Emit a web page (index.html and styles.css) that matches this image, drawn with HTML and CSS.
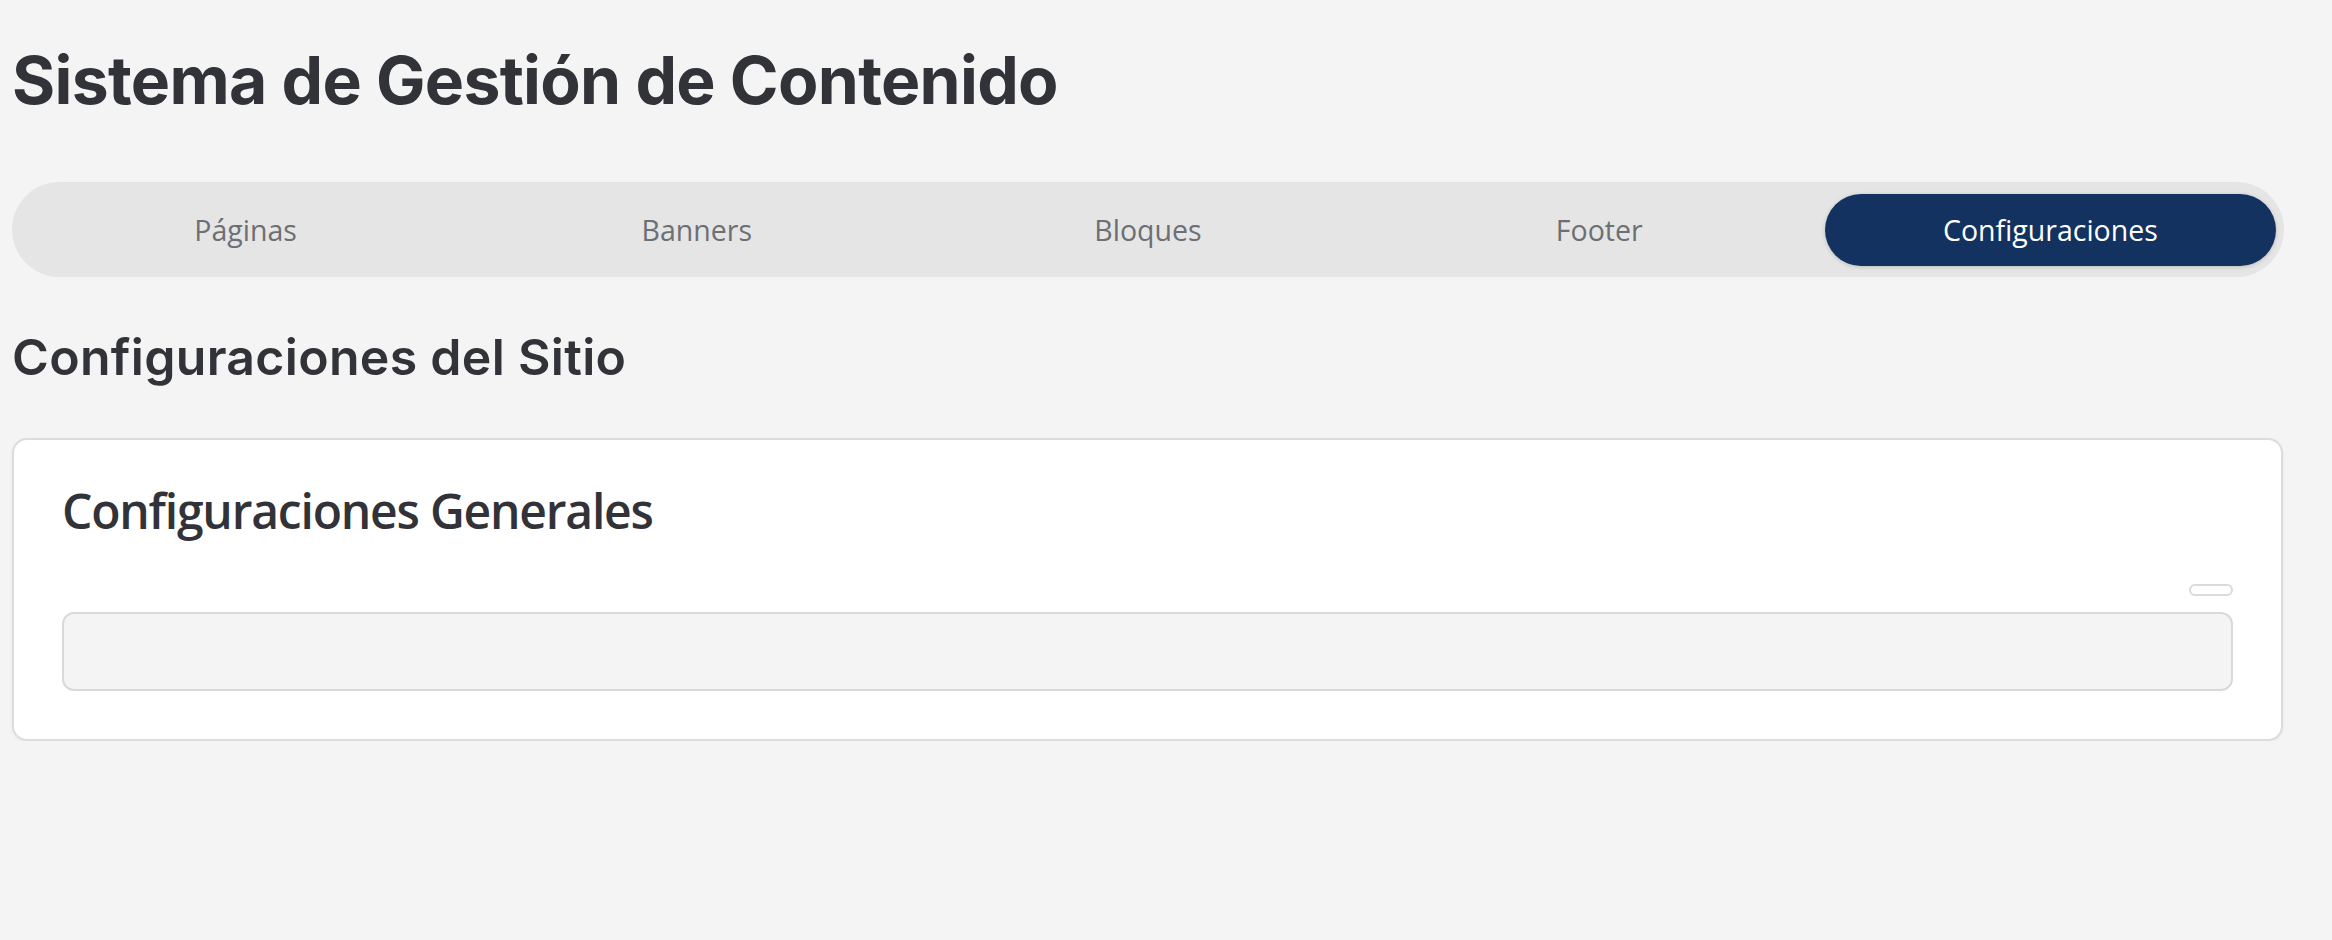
FILE: index.html
```html
<!DOCTYPE html>
<html lang="es">
<head>
<meta charset="utf-8">
<title>Sistema de Gestión de Contenido</title>
<link rel="stylesheet" href="styles.css">
</head>
<body>
<main class="page">
  <h1 class="page-title">Sistema de Gestión de Contenido</h1>
  <nav class="tabs">
    <button class="tab">Páginas</button>
    <button class="tab">Banners</button>
    <button class="tab">Bloques</button>
    <button class="tab">Footer</button>
    <button class="tab tab-active">Configuraciones</button>
  </nav>
  <h2 class="section-title">Configuraciones del Sitio</h2>
  <section class="card">
    <h3 class="card-title">Configuraciones Generales</h3>
    <div class="field">
      <span class="field-badge"></span>
      <div class="field-input"></div>
    </div>
  </section>
</main>
</body>
</html>
```

FILE: styles.css
```css
* { box-sizing: border-box; }
html, body { margin: 0; padding: 0; }
body {
  background: #f4f4f4;
  color: #323338;
  font-family: "Open Sans", "Liberation Sans", sans-serif;
}
.page {
  width: 2272px;
  margin-left: 12px;
  padding-top: 41px;
}
.page-title {
  margin: 0;
  font-family: Inter, "DejaVu Sans", sans-serif;
  font-weight: 700;
  font-size: 66px;
  letter-spacing: -0.7px;
  line-height: 1.2;
  color: #323338;
}
.tabs {
  margin-top: 62px;
  display: grid;
  grid-template-columns: repeat(5, 1fr);
  padding: 12px 8px 11px;
  background: #e5e5e5;
  border-radius: 48px;
}
.tab {
  border: 0;
  background: transparent;
  height: 72px;
  border-radius: 36px;
  font-family: "Open Sans", sans-serif;
  font-size: 28.5px;
  color: #6c6f74;
  padding: 0;
  cursor: pointer;
}
.tab-active {
  background: #133260;
  color: #ffffff;
  box-shadow: 0 1px 4px rgba(0, 0, 0, 0.18);
}
.section-title {
  margin: 50px 0 0;
  font-family: Inter, "DejaVu Sans", sans-serif;
  font-weight: 600;
  font-size: 50px;
  letter-spacing: 0.3px;
  line-height: 1.2;
  color: #323338;
}
.card {
  margin-top: 51px;
  width: 2271px;
  background: #ffffff;
  border: 2px solid #dcdcdc;
  border-radius: 15px;
  padding: 42px 48px 48px;
  box-shadow: 0 1px 3px rgba(0, 0, 0, 0.06);
}
.card-title {
  margin: 0;
  font-family: "Open Sans", sans-serif;
  font-weight: 600;
  font-size: 48px;
  letter-spacing: -1.2px;
  line-height: 1.2;
  color: #323338;
}
.field {
  margin-top: 44px;
  display: flex;
  flex-direction: column;
  gap: 16px;
}
.field-badge {
  align-self: flex-end;
  width: 44px;
  height: 12px;
  border: 2px solid #dadada;
  border-radius: 8px;
  background: #ffffff;
}
.field-input {
  height: 79px;
  background: #f4f4f4;
  border: 2px solid #d9d9d9;
  border-radius: 12px;
}
```
